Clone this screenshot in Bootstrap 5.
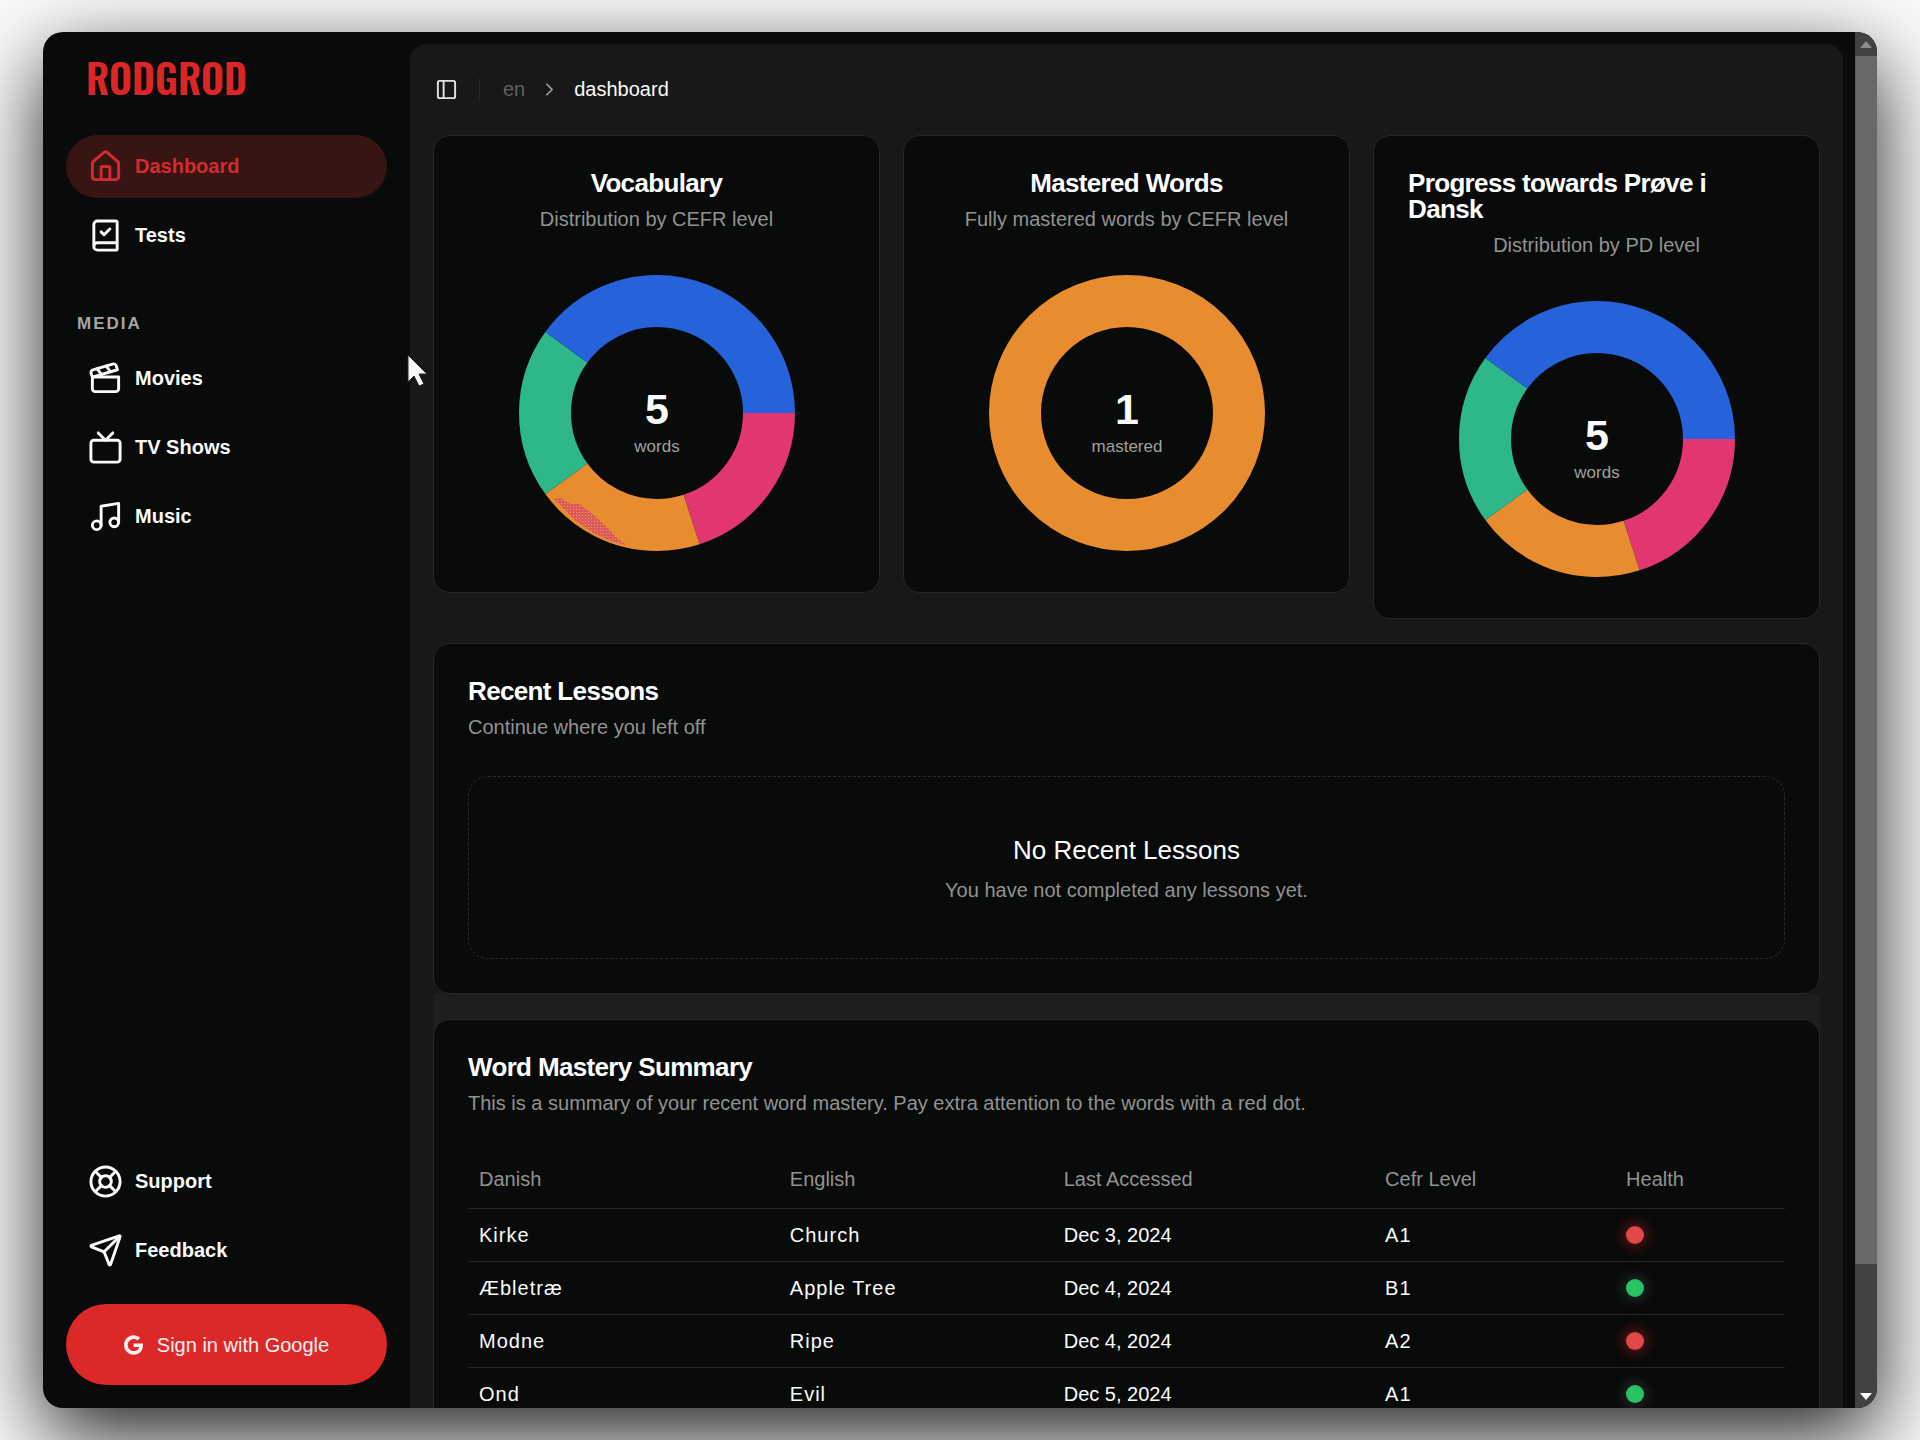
<!DOCTYPE html>
<html lang="en" data-bs-theme="dark">
<head>
<meta charset="utf-8">
<meta name="viewport" content="width=device-width, initial-scale=1">
<title>Rodgrod – Dashboard</title>
<link href="https://cdn.jsdelivr.net/npm/bootstrap@5.3.0/dist/css/bootstrap.min.css" rel="stylesheet">
<style>
  body {
    font-family: "Liberation Sans", Arial, sans-serif;
    font-size: 20px;
    line-height: 29px;
    color: #fafafa;
    background: #fbfbfb;
    padding: 32px 43px;
    height: 100vh;
    overflow: hidden;
  }
  .app-window {
    height: 100%;
    background: #090a0a;
    border-radius: 20px;
    box-shadow: 0 28px 84px 0 rgba(0, 0, 0, .88);
  }
  .app-clip { border-radius: 20px; }

  /* Sidebar */
  .sidebar { width: 367px; padding: 23px; }
  .brand {
    font-family: "Oswald", "Bebas Neue", "Liberation Sans Narrow", "Liberation Sans", sans-serif;
    font-weight: 600;
    font-size: 40px;
    line-height: 44px;
    color: #dc2626;
    margin-bottom: 36px;
    padding-left: 20px;
  }
  .side-nav { gap: 6px; }
  .side-nav .nav-link {
    display: flex;
    align-items: center;
    gap: 12px;
    height: 63px;
    padding: 0 22px;
    border-radius: 32px;
    color: #fafafa;
    font-weight: 700;
  }
  .side-nav .nav-link.active { background: #381413; color: #d12c2f; }
  .side-nav svg { width: 35px; height: 35px; }
  .side-label {
    margin: 34px 0 0;
    padding-left: 11px;
    font-size: 17px;
    line-height: 46px;
    font-weight: 700;
    letter-spacing: 2px;
    color: #a6a6a6;
  }
  .btn-google {
    height: 81px;
    margin-top: 22px;
    border: 0;
    border-radius: 41px;
    background: #dc2829;
    color: #fdf0ee;
    font-size: 20px;
    gap: 14px;
  }
  .btn-google:hover { background: #c42223; color: #fff; }
  .line-icon { fill: none; stroke: currentColor; stroke-width: 2; stroke-linecap: round; stroke-linejoin: round; flex: none; }

  /* Main panel */
  .main-panel {
    background: #181818;
    margin: 12px 12px 0 0;
    border-radius: 16px 16px 0 0;
    padding: 0 23px;
  }
  .topbar { height: 91px; }
  .toggle-btn { color: #e4e4e4; padding: 0 2px; border: 0; line-height: 1; }
  .toggle-btn svg { width: 23px; height: 23px; }
  .topbar-rule { width: 1px; height: 24px; background: #272727; margin: 0 23px 0 19px; }
  .crumbs { gap: 14px; }
  .crumbs a { color: #606060; text-decoration: none; }
  .crumbs svg { width: 21px; height: 21px; color: #a0a0a0; }

  .panel-card {
    background: #090a0a;
    border: 1px solid #262727;
    border-radius: 17px;
    padding: 34px;
    color: #fafafa;
  }
  .chart-grid { --bs-gutter-x: 23px; margin-bottom: 24px; }
  .chart-card { padding-bottom: 0; }
  .card-head { gap: 9px; }
  .card-head h2 { font-size: 26px; line-height: 26px; font-weight: 700; letter-spacing: -.025em; margin: 0; }
  .card-head p { margin: 0; color: #929292; }
  .donut-box { height: 358px; }
  .donut-box svg { width: 276px; height: 276px; }
  .donut-box circle { fill: none; stroke-width: 52; }
  .donut-num { font-size: 43px; font-weight: 700; fill: #fafafa; text-anchor: middle; }
  .donut-cap { font-size: 17px; fill: #a0a0a0; text-anchor: middle; }

  .empty-box {
    margin-top: 34px;
    height: 183px;
    border: 1px dashed #2a2b2b;
    border-radius: 20px;
    gap: 6px;
  }
  .empty-box h3 { font-size: 26px; line-height: 40px; font-weight: 400; margin: 0; }
  .empty-box p { margin: 0; color: #929292; }

  .mastery-wrap { background: #1e1e1e; padding-top: 25px; }
  .word-table { margin: 33px 0 0; table-layout: fixed; --bs-table-bg: transparent; --bs-table-color: #fafafa; }
  .word-table > :not(caption) > * > * { padding: 12px 11px; line-height: 28px; border-bottom: 1px solid #252626; }
  .word-table > thead > tr > th { padding: 14px 11px; line-height: 29px; font-weight: 400; color: #929292; }
  .word-table .word-cell { letter-spacing: 1px; }
  .health-dot { display: block; width: 18px; height: 18px; border-radius: 50%; }
  .dot-bad { background: #e0484b; box-shadow: 0 0 14px 2px rgba(220, 38, 38, .5); }
  .dot-good { background: #27c463; box-shadow: 0 0 14px 2px rgba(120, 150, 140, .3); }

  /* Scroll rail */
  .rail { width: 22px; background: #424242; }
  .rail-cap { height: 24px; }
  .rail-thumb { height: 91%; background: #686868; border-left: 1px solid #5a5a5a; }
  .pointer { left: 363px; top: 322px; width: 23px; height: 34px; }
</style>
</head>
<body>
<div class="app-window position-relative">
  <div class="app-clip d-flex h-100 overflow-hidden">

    <aside class="sidebar d-flex flex-column flex-shrink-0">
      <div class="brand">RODGROD</div>
      <ul class="nav flex-column side-nav">
        <li><a class="nav-link active" href="#" aria-current="page">
          <svg class="line-icon" viewBox="0 0 24 24"><path d="M15 21v-8a1 1 0 0 0-1-1h-4a1 1 0 0 0-1 1v8"/><path d="M3 10a2 2 0 0 1 .709-1.528l7-5.999a2 2 0 0 1 2.582 0l7 5.999A2 2 0 0 1 21 10v9a2 2 0 0 1-2 2H5a2 2 0 0 1-2-2z"/></svg>
          Dashboard</a></li>
        <li><a class="nav-link" href="#">
          <svg class="line-icon" viewBox="0 0 24 24"><path d="M4 19.5v-15A2.5 2.5 0 0 1 6.5 2H19a1 1 0 0 1 1 1v18a1 1 0 0 1-1 1H6.5a1 1 0 0 1 0-5H20"/><path d="m9 9.5 2 2 4-4"/></svg>
          Tests</a></li>
      </ul>
      <h2 class="side-label">MEDIA</h2>
      <ul class="nav flex-column side-nav">
        <li><a class="nav-link" href="#">
          <svg class="line-icon" viewBox="0 0 24 24"><path d="M20.2 6 3 11l-.9-2.4c-.3-1.1.3-2.2 1.3-2.5l13.5-4c1.1-.3 2.2.3 2.5 1.3Z"/><path d="m6.2 5.3 3.1 3.9"/><path d="m12.4 3.4 3.1 4"/><path d="M3 11h18v8a2 2 0 0 1-2 2H5a2 2 0 0 1-2-2Z"/></svg>
          Movies</a></li>
        <li><a class="nav-link" href="#">
          <svg class="line-icon" viewBox="0 0 24 24"><rect width="20" height="15" x="2" y="7" rx="2"/><path d="m17 2-5 5-5-5"/></svg>
          TV Shows</a></li>
        <li><a class="nav-link" href="#">
          <svg class="line-icon" viewBox="0 0 24 24"><path d="M9 18V5l12-2v13"/><circle cx="6" cy="18" r="3"/><circle cx="18" cy="16" r="3"/></svg>
          Music</a></li>
      </ul>
      <ul class="nav flex-column side-nav mt-auto">
        <li><a class="nav-link" href="#">
          <svg class="line-icon" viewBox="0 0 24 24"><circle cx="12" cy="12" r="10"/><path d="m4.93 4.93 4.24 4.24"/><path d="m14.83 9.17 4.24-4.24"/><path d="m14.83 14.83 4.24 4.24"/><path d="m9.17 14.83-4.24 4.24"/><circle cx="12" cy="12" r="4"/></svg>
          Support</a></li>
        <li><a class="nav-link" href="#">
          <svg class="line-icon" viewBox="0 0 24 24"><path d="M14.536 21.686a.5.5 0 0 0 .937-.024l6.5-19a.496.496 0 0 0-.635-.635l-19 6.5a.5.5 0 0 0-.024.937l7.93 3.18a2 2 0 0 1 1.112 1.11z"/><path d="m21.854 2.147-10.94 10.939"/></svg>
          Feedback</a></li>
      </ul>
      <button type="button" class="btn btn-google d-flex align-items-center justify-content-center">
        <svg width="19" height="20" viewBox="0 0 488 512" fill="currentColor"><path d="M488 261.8C488 403.3 391.1 504 248 504 110.8 504 0 393.2 0 256S110.8 8 248 8c66.8 0 123 24.5 166.3 64.9l-67.5 64.9C258.5 52.6 94.3 116.6 94.3 256c0 86.5 69.1 156.6 153.7 156.6 98.2 0 135-70.4 140.8-106.9H248v-85.3h236.1c2.3 12.7 3.9 24.9 3.9 41.4z"/></svg>
        Sign in with Google
      </button>
    </aside>

    <main class="main-panel flex-grow-1">
      <header class="topbar d-flex align-items-center">
        <button type="button" class="btn toggle-btn" aria-label="Toggle sidebar">
          <svg class="line-icon" viewBox="0 0 24 24"><rect width="18" height="18" x="3" y="3" rx="2"/><path d="M9 3v18"/></svg>
        </button>
        <div class="topbar-rule"></div>
        <nav class="crumbs d-flex align-items-center" aria-label="breadcrumb">
          <a href="#">en</a>
          <svg class="line-icon" viewBox="0 0 24 24"><path d="m9 18 6-6-6-6"/></svg>
          <span aria-current="page">dashboard</span>
        </nav>
      </header>

      <div class="row chart-grid align-items-start">
        <div class="col-4">
          <section class="panel-card chart-card">
            <div class="card-head d-flex flex-column align-items-center"><h2>Vocabulary</h2><p>Distribution by CEFR level</p></div>
            <div class="donut-box d-flex align-items-center justify-content-center">
              <svg viewBox="-138 -138 276 276" role="img" aria-label="5 words">
                <defs><pattern id="speckle" width="3" height="3" patternUnits="userSpaceOnUse"><rect width="3" height="3" fill="#dc5a58"/><rect width="1" height="1" fill="#e8a060"/></pattern></defs>
                <circle r="112" stroke="#e23670" pathLength="5" stroke-dasharray="1 4"/>
                <circle r="112" stroke="#e88c30" pathLength="5" stroke-dasharray="1 4" stroke-dashoffset="-1"/>
                <circle r="112" stroke="#2eb88a" pathLength="5" stroke-dasharray="1 4" stroke-dashoffset="-2"/>
                <circle r="112" stroke="#2662d9" pathLength="5" stroke-dasharray="2 3" stroke-dashoffset="-3"/>
                <path d="M-103 86-97 85-86 91-78 91-67 99-50 114-40 125-31 132-46 128-64 120-82 107-92 97Z" fill="url(#speckle)"/>
                <text class="donut-num" y="11">5</text>
                <text class="donut-cap" y="39">words</text>
              </svg>
            </div>
          </section>
        </div>
        <div class="col-4">
          <section class="panel-card chart-card">
            <div class="card-head d-flex flex-column align-items-center"><h2>Mastered Words</h2><p>Fully mastered words by CEFR level</p></div>
            <div class="donut-box d-flex align-items-center justify-content-center">
              <svg viewBox="-138 -138 276 276" role="img" aria-label="1 mastered">
                <circle r="112" stroke="#e88c30"/>
                <text class="donut-num" y="11">1</text>
                <text class="donut-cap" y="39">mastered</text>
              </svg>
            </div>
          </section>
        </div>
        <div class="col-4">
          <section class="panel-card chart-card">
            <div class="card-head d-flex flex-column align-items-center"><h2>Progress towards Prøve i Dansk</h2><p>Distribution by PD level</p></div>
            <div class="donut-box d-flex align-items-center justify-content-center">
              <svg viewBox="-138 -138 276 276" role="img" aria-label="5 words">
                <circle r="112" stroke="#e23670" pathLength="5" stroke-dasharray="1 4"/>
                <circle r="112" stroke="#e88c30" pathLength="5" stroke-dasharray="1 4" stroke-dashoffset="-1"/>
                <circle r="112" stroke="#2eb88a" pathLength="5" stroke-dasharray="1 4" stroke-dashoffset="-2"/>
                <circle r="112" stroke="#2662d9" pathLength="5" stroke-dasharray="2 3" stroke-dashoffset="-3"/>
                <text class="donut-num" y="11">5</text>
                <text class="donut-cap" y="39">words</text>
              </svg>
            </div>
          </section>
        </div>
      </div>

      <section class="panel-card">
        <div class="card-head d-flex flex-column"><h2>Recent Lessons</h2><p>Continue where you left off</p></div>
        <div class="empty-box d-flex flex-column align-items-center justify-content-center">
          <h3>No Recent Lessons</h3>
          <p>You have not completed any lessons yet.</p>
        </div>
      </section>

      <div class="mastery-wrap">
        <section class="panel-card">
          <div class="card-head d-flex flex-column"><h2>Word Mastery Summary</h2><p>This is a summary of your recent word mastery. Pay extra attention to the words with a red dot.</p></div>
          <table class="table word-table">
            <colgroup><col style="width:23.6%"><col style="width:20.8%"><col style="width:24.4%"><col style="width:18.3%"><col style="width:12.9%"></colgroup>
            <thead><tr><th scope="col">Danish</th><th scope="col">English</th><th scope="col">Last Accessed</th><th scope="col">Cefr Level</th><th scope="col">Health</th></tr></thead>
            <tbody class="align-middle">
              <tr><td class="word-cell">Kirke</td><td class="word-cell">Church</td><td>Dec 3, 2024</td><td class="word-cell">A1</td><td><span class="health-dot dot-bad"></span></td></tr>
              <tr><td class="word-cell">Æbletræ</td><td class="word-cell">Apple Tree</td><td>Dec 4, 2024</td><td class="word-cell">B1</td><td><span class="health-dot dot-good"></span></td></tr>
              <tr><td class="word-cell">Modne</td><td class="word-cell">Ripe</td><td>Dec 4, 2024</td><td class="word-cell">A2</td><td><span class="health-dot dot-bad"></span></td></tr>
              <tr><td class="word-cell">Ond</td><td class="word-cell">Evil</td><td>Dec 5, 2024</td><td class="word-cell">A1</td><td><span class="health-dot dot-good"></span></td></tr>
            </tbody>
          </table>
        </section>
      </div>
    </main>

    <div class="rail d-flex flex-column flex-shrink-0" aria-hidden="true">
      <div class="rail-cap d-flex align-items-center justify-content-center"><svg width="12" height="7" viewBox="0 0 12 7"><path d="M6 0l6 7H0z" fill="#8b8b8b"/></svg></div>
      <div class="flex-grow-1"><div class="rail-thumb"></div></div>
      <div class="rail-cap d-flex align-items-center justify-content-center"><svg width="12" height="7" viewBox="0 0 12 7"><path d="M0 0h12L6 7z" fill="#fff"/></svg></div>
    </div>
  </div>
  <svg class="pointer position-absolute" viewBox="0 0 23 34" aria-hidden="true"><path d="M2 1v27l6-6 5 10 5-2-5-10h8z" fill="#fafafa" stroke="#222" stroke-width="1"/></svg>
</div>
<script src="https://cdn.jsdelivr.net/npm/bootstrap@5.3.0/dist/js/bootstrap.bundle.min.js"></script>
</body>
</html>
